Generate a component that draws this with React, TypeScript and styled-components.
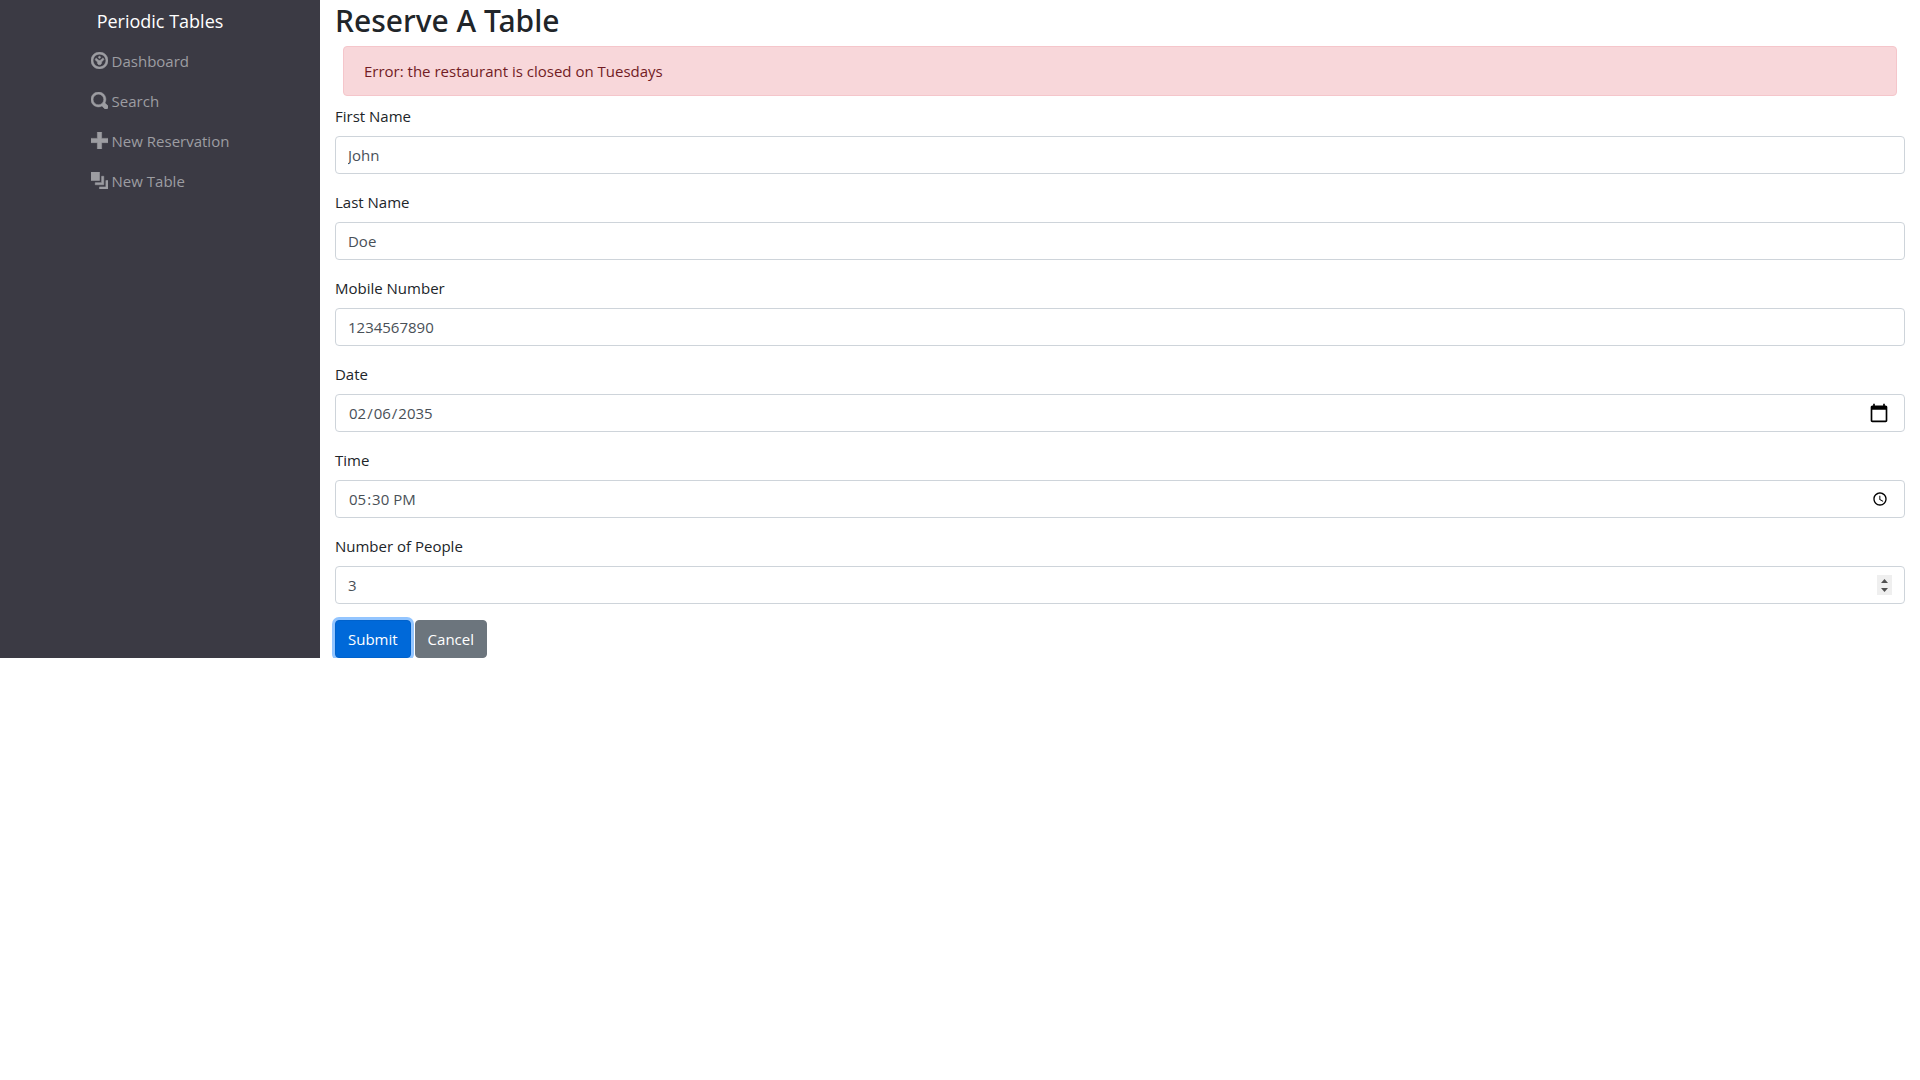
import React, { useState } from "react";
import styled, { createGlobalStyle } from "styled-components";

const GlobalStyle = createGlobalStyle`
  *, *::before, *::after { box-sizing: border-box; }
  body {
    margin: 0;
    background: #fff;
    color: #212529;
    font-family: "Segoe UI", "Open Sans", "Noto Sans", sans-serif;
    font-size: 15px;
    line-height: 24px;
  }
`;

const Layout = styled.div`
  display: flex;
`;

const Sidebar = styled.nav`
  flex: 0 0 calc(100% / 6);
  display: flex;
  flex-direction: column;
  align-items: center;
  background: #3b3a44;
`;

const Brand = styled.a`
  padding: 6px 0 5px;
  font-size: 18px;
  line-height: 30px;
  color: #fff;
  text-decoration: none;
`;

const NavList = styled.ul`
  list-style: none;
  margin: 0;
  padding: 0;
`;

const NavLink = styled.a`
  display: flex;
  align-items: flex-start;
  gap: 4px;
  padding: 8px 0;
  color: #9d9da2;
  text-decoration: none;
`;

const Icon = styled.svg`
  width: 17px;
  height: 17px;
  margin-top: 3px;
  fill: currentColor;
  stroke: currentColor;
  stroke-width: 0.25;
`;

const Main = styled.main`
  flex: 1;
  min-width: 0;
  padding: 0 15px;
`;

const Title = styled.h1`
  margin: 0;
  padding: 2px 0 6px;
  font-family: "Segoe UI", "Noto Sans", sans-serif;
  font-size: 30px;
  line-height: 38px;
  font-weight: 500;
`;

const Alert = styled.div`
  margin: 0 8px 8px;
  padding: 12px 20px;
  border: 1px solid #f5c6cb;
  border-radius: 4px;
  background: #f8d7da;
  color: #721c24;
`;

const Form = styled.form`
  display: flex;
  flex-direction: column;
  gap: 16px;
`;

const Field = styled.div`
  display: flex;
  flex-direction: column;
  gap: 8px;
`;

const Input = styled.input`
  width: 100%;
  height: 38px;
  padding: 6px 12px;
  border: 1px solid #ced4da;
  border-radius: 4px;
  background: #fff;
  color: #495057;
  font: inherit;

  &::-webkit-inner-spin-button {
    -webkit-appearance: none;
    width: 15px;
    height: 20px;
    opacity: 1;
    background: #efefef
      url("data:image/svg+xml,%3Csvg xmlns='http://www.w3.org/2000/svg' width='15' height='20'%3E%3Cpath d='M4 8l3.5-4L11 8zM4 13h7l-3.5 4z' fill='%23505050'/%3E%3C/svg%3E")
      no-repeat;
  }

  &[type="date"]::-webkit-calendar-picker-indicator {
    width: 20px;
    height: 20px;
    padding: 0;
    margin-right: 3px;
    background-size: 20px 20px;
  }

  &[type="time"]::-webkit-calendar-picker-indicator {
    width: 16px;
    height: 16px;
    padding: 0;
    margin-right: 4px;
    background-size: 16px 16px;
  }
`;

const Actions = styled.div`
  display: flex;
  gap: 4px;
`;

const Button = styled.button<{ $primary?: boolean }>`
  padding: 6px 12px;
  border: 1px solid ${(p) => (p.$primary ? "#0062cc" : "#6c757d")};
  border-radius: 4px;
  background: ${(p) => (p.$primary ? "#0069d9" : "#6c757d")};
  box-shadow: ${(p) => (p.$primary ? "0 0 0 3px #93c5ff" : "none")};
  color: #fff;
  font: inherit;
`;

const links = [
  {
    label: "Dashboard",
    path: "M4 0c-2.2 0-4 1.8-4 4s1.8 4 4 4 4-1.8 4-4-1.8-4-4-4zm0 1c1.66 0 3 1.34 3 3s-1.34 3-3 3-3-1.34-3-3 1.34-3 3-3zm0 1c-.28 0-.5.22-.5.5s.22.5.5.5.5-.22.5-.5-.22-.5-.5-.5zm-1.66 1a.5.5 0 0 0-.19.84l.91.91c-.02.08-.06.16-.06.25 0 .55.45 1 1 1s1-.45 1-1c0-.1-.03-.2-.06-.28l.91-.88a.5.5 0 1 0-.7-.7l-.9.9c-.08-.02-.16-.04-.25-.04-.09 0-.17.02-.25.04l-.91-.91a.5.5 0 0 0-.5-.13z",
  },
  {
    label: "Search",
    path: "M3.5 0c-1.93 0-3.5 1.57-3.5 3.5s1.57 3.5 3.5 3.5c.59 0 1.17-.14 1.66-.41a1 1 0 0 0 .13.13l1 1a1.02 1.02 0 1 0 1.44-1.44l-1-1a1 1 0 0 0-.16-.13c.27-.49.44-1.06.44-1.66 0-1.93-1.55-3.5-3.5-3.5zm0 1c1.39 0 2.5 1.11 2.5 2.5 0 .66-.24 1.27-.66 1.72-.01.01-.02.02-.03.03a1 1 0 0 0-.13.13c-.44.4-1.04.63-1.69.63-1.39 0-2.5-1.11-2.5-2.5s1.11-2.5 2.5-2.5z",
  },
  { label: "New Reservation", path: "M3 0v3h-3v2h3v3h2v-3h3v-2h-3v-3h-2z" },
  {
    label: "New Table",
    path: "M0 0v4h4v-4h-4zm5 2v3h-3v1h4v-4h-1zm2 2v3h-3v1h4v-4h-1z",
  },
];

const fields = [
  { name: "first_name", label: "First Name", type: "text" },
  { name: "last_name", label: "Last Name", type: "text" },
  { name: "mobile_number", label: "Mobile Number", type: "tel" },
  { name: "reservation_date", label: "Date", type: "date" },
  { name: "reservation_time", label: "Time", type: "time" },
  { name: "people", label: "Number of People", type: "number" },
];

export default function App() {
  const [values, setValues] = useState<Record<string, string>>({
    first_name: "John",
    last_name: "Doe",
    mobile_number: "1234567890",
    reservation_date: "2035-02-06",
    reservation_time: "17:30",
    people: "3",
  });

  return (
    <>
      <GlobalStyle />
      <Layout>
        <Sidebar>
          <Brand href="#">Periodic Tables</Brand>
          <NavList>
            {links.map((l) => (
              <li key={l.label}>
                <NavLink href="#">
                  <Icon viewBox="0 0 8 8" aria-hidden="true">
                    <path d={l.path} />
                  </Icon>
                  {l.label}
                </NavLink>
              </li>
            ))}
          </NavList>
        </Sidebar>
        <Main>
          <Title>Reserve A Table</Title>
          <Alert role="alert">Error: the restaurant is closed on Tuesdays</Alert>
          <Form onSubmit={(e) => e.preventDefault()}>
            {fields.map((f) => (
              <Field key={f.name}>
                <label htmlFor={f.name}>{f.label}</label>
                <Input
                  id={f.name}
                  name={f.name}
                  type={f.type}
                  value={values[f.name]}
                  onChange={(e) => setValues({ ...values, [f.name]: e.target.value })}
                />
              </Field>
            ))}
            <Actions>
              <Button type="submit" $primary>
                Submit
              </Button>
              <Button type="button">Cancel</Button>
            </Actions>
          </Form>
        </Main>
      </Layout>
    </>
  );
}
